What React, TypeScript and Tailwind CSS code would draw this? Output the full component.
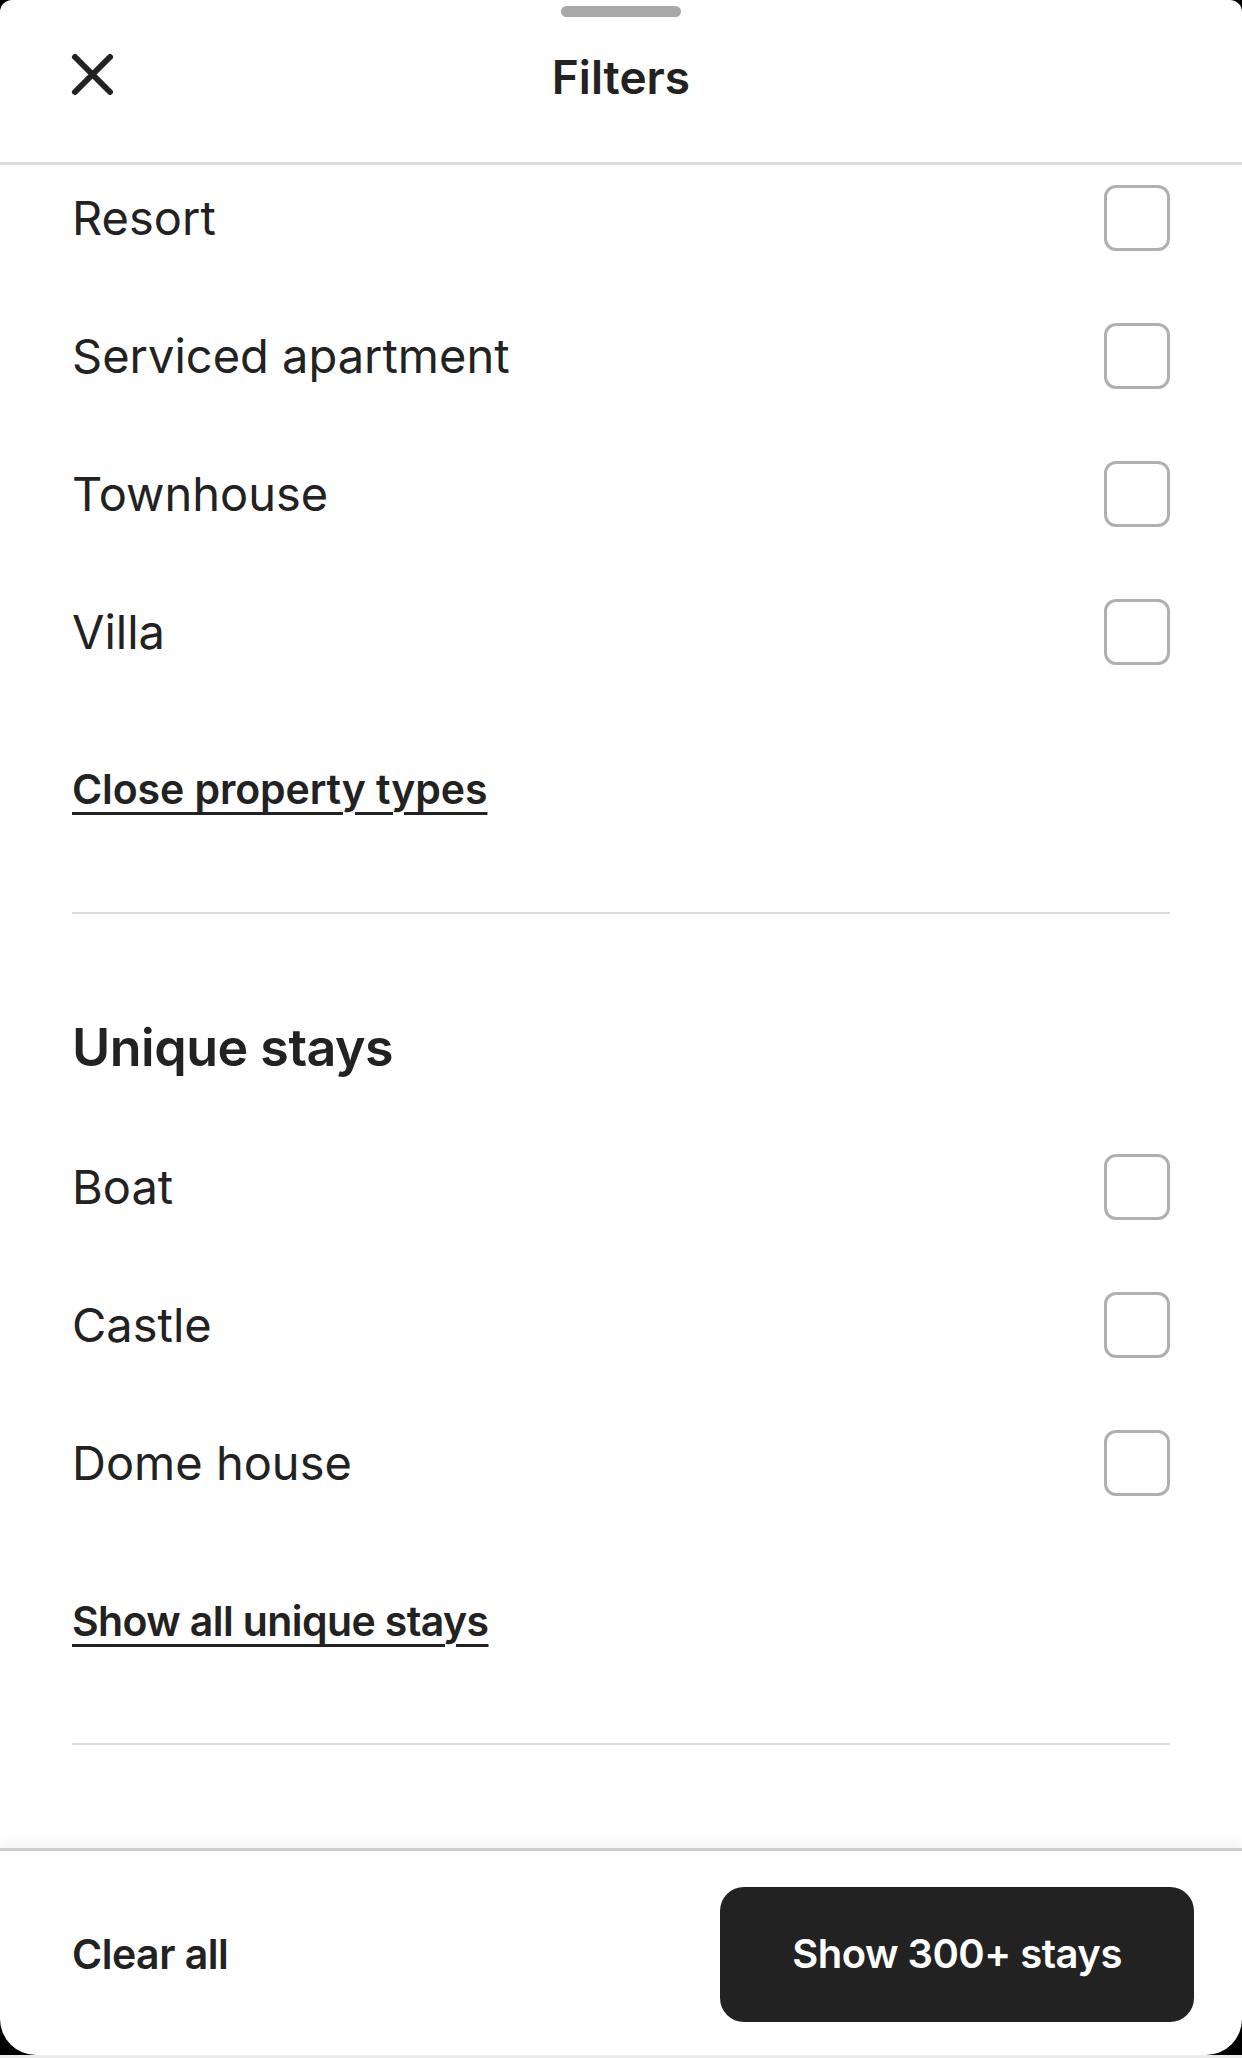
import React from "react";

const font = { fontFamily: "Inter, 'Noto Sans', sans-serif" };

function Checkbox() {
  return <div className="w-[66px] h-[66px] rounded-[12px] border-[3px] border-[#b0b0b0] bg-white shrink-0" />;
}

function Row({ label }: { label: string }) {
  return (
    <div className="h-[138px] flex items-center justify-between">
      <span className="text-[47px] leading-[60px] text-[#222222] font-normal">{label}</span>
      <Checkbox />
    </div>
  );
}

function LinkText({ children, wide }: { children: React.ReactNode; wide?: boolean }) {
  return (
    <div className="h-[60px] flex items-center">
      <span
        className={
          wide
            ? "text-[41px] leading-[60px] font-semibold text-[#222222] underline decoration-[3px] underline-offset-[8px] tracking-[-0.1px]"
            : "text-[41px] leading-[60px] font-semibold text-[#222222] underline decoration-[3px] underline-offset-[8px] tracking-[-0.6px]"
        }
      >
        {children}
      </span>
    </div>
  );
}

export default function App() {
  return (
    <div className="w-[1242px] h-[2058px] bg-black flex flex-col" style={font}>
      <div className="w-[1242px] h-[2055px] bg-white rounded-t-[12px] rounded-b-[36px] overflow-hidden flex flex-col">
        {/* Header */}
        <div className="h-[165px] border-b-[3px] border-[#dddddd] flex flex-col shrink-0">
          <div className="mt-[6px] mx-auto w-[120px] h-[11px] rounded-full bg-[#a8a8a8]" />
          <div className="h-[114px] grid grid-cols-[1fr_auto_1fr] items-center px-[69px]">
            <svg width="48" height="48" viewBox="0 0 48 48" fill="none" className="mt-[2px]">
              <path d="M6 6 L41 41 M41 6 L6 41" stroke="#222222" strokeWidth="6" strokeLinecap="round" />
            </svg>
            <span className="mt-[5px] text-[46px] leading-[60px] font-semibold text-[#222222]">Filters</span>
            <div />
          </div>
        </div>

        {/* Scroll content */}
        <div className="flex-1 overflow-hidden">
          <div className="-mt-[16px] px-[72px] flex flex-col">
            <Row label="Resort" />
            <Row label="Serviced apartment" />
            <Row label="Townhouse" />
            <Row label="Villa" />
            <div className="mt-[58px]">
              <LinkText wide>Close property types</LinkText>
            </div>
            <div className="mt-[93px] h-[2px] bg-[#dddddd]" />
            <div className="mt-[99px] h-[70px] flex items-center">
              <span className="text-[52px] leading-[70px] font-semibold text-[#222222] tracking-[-0.5px]">Unique stays</span>
            </div>
            <div className="mt-[35px]">
              <Row label="Boat" />
              <Row label="Castle" />
              <Row label="Dome house" />
            </div>
            <div className="mt-[59px]">
              <LinkText>Show all unique stays</LinkText>
            </div>
            <div className="mt-[92px] h-[2px] bg-[#dddddd]" />
          </div>
        </div>

        {/* Footer */}
        <div className="h-[207px] shrink-0 border-t-[3px] border-[#cccccc] shadow-[0_-8px_10px_rgba(0,0,0,0.04)] flex items-center justify-between pl-[72px] pr-[48px] pt-[2px]">
          <span className="text-[41px] leading-[60px] font-semibold text-[#222222] tracking-[-0.5px]">Clear all</span>
          <button className="w-[474px] h-[135px] rounded-[24px] bg-[#222222] text-white text-[40px] font-semibold tracking-[-0.5px]">
            Show 300+ stays
          </button>
        </div>
      </div>
      <div className="h-[3px] bg-[#ececec]" />
    </div>
  );
}
